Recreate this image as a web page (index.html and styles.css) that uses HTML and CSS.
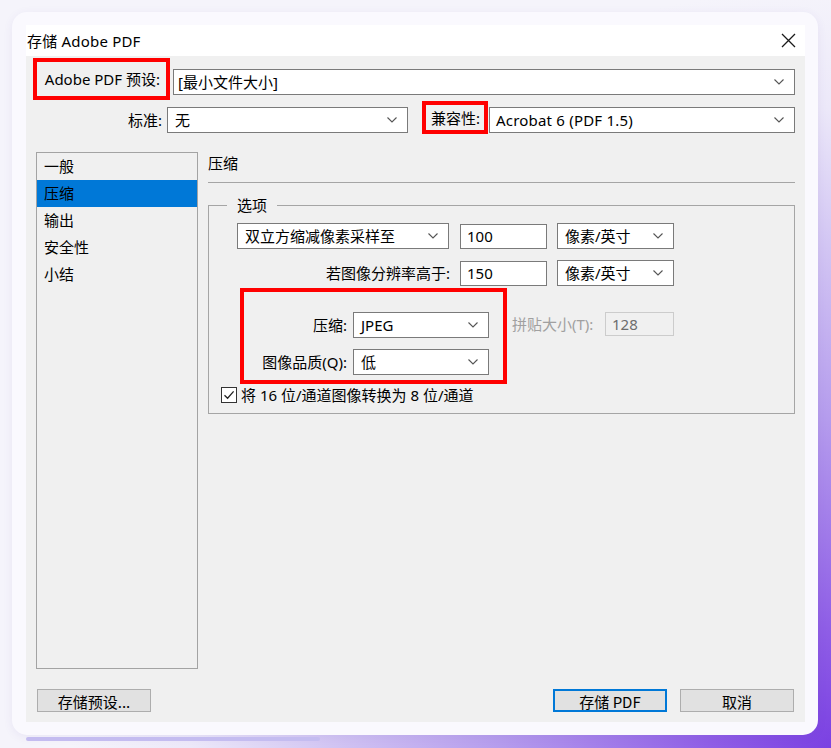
FILE: index.html
```html
<!DOCTYPE html>
<html lang="zh-CN">
<head>
<meta charset="utf-8">
<title>存储 Adobe PDF</title>
<link rel="stylesheet" href="styles.css">
</head>
<body>
<div class="card">
  <div class="dialog">
    <div class="titlebar">
      <span class="title">存储 Adobe PDF</span>
      <svg class="close" width="15" height="15" viewBox="0 0 15 15"><path d="M1 1L14 14M14 1L1 14" stroke="#1a1a1a" stroke-width="1.3" fill="none"/></svg>
    </div>
    <div class="body">
      <div class="row row-preset">
        <label class="mark lbl-preset">Adobe PDF 预设:</label>
        <div class="select sel-preset"><span class="val">[最小文件大小]</span><svg class="chev" width="10" height="6" viewBox="0 0 10 6"><path d="M0.5 0.5L5 5L9.5 0.5" stroke="#555" stroke-width="1.1" fill="none"/></svg></div>
      </div>
      <div class="row row-std">
        <label class="lbl-std">标准:</label>
        <div class="select sel-std"><span class="val">无</span><svg class="chev" width="10" height="6" viewBox="0 0 10 6"><path d="M0.5 0.5L5 5L9.5 0.5" stroke="#555" stroke-width="1.1" fill="none"/></svg></div>
        <label class="mark lbl-compat">兼容性:</label>
        <div class="select sel-compat"><span class="val">Acrobat 6 (PDF 1.5)</span><svg class="chev" width="10" height="6" viewBox="0 0 10 6"><path d="M0.5 0.5L5 5L9.5 0.5" stroke="#555" stroke-width="1.1" fill="none"/></svg></div>
      </div>
      <div class="main">
        <ul class="nav">
          <li>一般</li>
          <li class="active">压缩</li>
          <li>输出</li>
          <li>安全性</li>
          <li>小结</li>
        </ul>
        <section class="panel">
          <h2 class="panel-title">压缩</h2>
          <div class="sep"></div>
          <fieldset class="group">
            <legend>选项</legend>
            <div class="grow grow-a">
              <div class="select sel-method"><span class="val">双立方缩减像素采样至</span><svg class="chev" width="10" height="6" viewBox="0 0 10 6"><path d="M0.5 0.5L5 5L9.5 0.5" stroke="#555" stroke-width="1.1" fill="none"/></svg></div>
              <div class="input inp-res">100</div>
              <div class="select sel-unit"><span class="val">像素/英寸</span><svg class="chev" width="10" height="6" viewBox="0 0 10 6"><path d="M0.5 0.5L5 5L9.5 0.5" stroke="#555" stroke-width="1.1" fill="none"/></svg></div>
            </div>
            <div class="grow grow-b">
              <label class="lbl-above">若图像分辨率高于:</label>
              <div class="input inp-res">150</div>
              <div class="select sel-unit"><span class="val">像素/英寸</span><svg class="chev" width="10" height="6" viewBox="0 0 10 6"><path d="M0.5 0.5L5 5L9.5 0.5" stroke="#555" stroke-width="1.1" fill="none"/></svg></div>
            </div>
            <div class="grow grow-c">
              <div class="mark-box">
                <div class="pair">
                  <label class="lbl-pair">压缩:</label>
                  <div class="select sel-pair"><span class="val">JPEG</span><svg class="chev" width="10" height="6" viewBox="0 0 10 6"><path d="M0.5 0.5L5 5L9.5 0.5" stroke="#555" stroke-width="1.1" fill="none"/></svg></div>
                </div>
                <div class="pair">
                  <label class="lbl-pair">图像品质(Q):</label>
                  <div class="select sel-pair"><span class="val">低</span><svg class="chev" width="10" height="6" viewBox="0 0 10 6"><path d="M0.5 0.5L5 5L9.5 0.5" stroke="#555" stroke-width="1.1" fill="none"/></svg></div>
                </div>
              </div>
              <div class="tile">
                <label class="lbl-tile">拼贴大小(T):</label>
                <div class="input inp-tile">128</div>
              </div>
            </div>
            <div class="check-row">
              <span class="checkbox"><svg width="12" height="12" viewBox="0 0 12 12"><path d="M1.5 6.2L4.6 9.3L10.6 2.4" stroke="#222" stroke-width="1.3" fill="none"/></svg></span>
              <span>将 16 位/通道图像转换为 8 位/通道</span>
            </div>
          </fieldset>
        </section>
      </div>
      <div class="footer">
        <button class="btn">存储预设...</button>
        <div class="spacer"></div>
        <button class="btn btn-default">存储 PDF</button>
        <button class="btn">取消</button>
      </div>
    </div>
  </div>
</div>
<div class="underline"></div>
</body>
</html>
```
FILE: styles.css
```css
html, body {
  margin: 0;
  padding: 0;
}

body {
  width: 831px;
  height: 748px;
  overflow: hidden;
  background:
    radial-gradient(circle at 100% 100%, #7b41e2 0, #8f5ee6 120px, #b59ced 330px, #d2c5f3 500px, #ece8f9 640px, #f5f4fb 760px);
  font-family: "Noto Sans", "Noto Sans CJK SC", sans-serif;
  font-size: 15px;
  color: #000;
}

/* outer rounded window frame */
.card {
  margin: 12px 0 0 12px;
  width: 806px;
  height: 723px;
  box-sizing: border-box;
  padding: 13px 13px 13px 14px;
  background: #faf9fe;
  border-radius: 15px;
  box-shadow: 0 2px 10px rgba(90, 70, 170, 0.08);
}

.underline {
  margin: 2px 0 0 26px;
  width: 294px;
  height: 4px;
  border-radius: 2px;
  background: #c4bcf0;
}

.dialog {
  display: flex;
  flex-direction: column;
  height: 100%;
}

.titlebar {
  height: 31px;
  flex: none;
  display: flex;
  align-items: center;
  justify-content: space-between;
  background: #fff;
  padding: 0 9px 0 1px;
}

.title {
  font-size: 15px;
  line-height: 20px;
  letter-spacing: 0.2px;
}

.body {
  flex: 1;
  background: #f0f0f0;
  padding: 2px 10px 0 7px;
  display: flex;
  flex-direction: column;
}

/* generic controls */
.select,
.input {
  box-sizing: border-box;
  height: 26px;
  border: 1px solid #7a7a7a;
  background: #fff;
  display: flex;
  align-items: center;
  line-height: 20px;
  white-space: nowrap;
}

.select {
  padding: 0 10px 0 7px;
  justify-content: space-between;
}

.select .chev {
  flex: none;
}

.input {
  padding: 0 6px;
}

label {
  white-space: nowrap;
  line-height: 20px;
}

/* red annotation frame */
.mark {
  box-sizing: border-box;
  border: 4px solid #f00;
  display: flex;
  align-items: center;
}

.row {
  display: flex;
  align-items: flex-start;
}

.lbl-preset {
  width: 137px;
  height: 42px;
  justify-content: flex-end;
  padding-right: 6px;
}

.sel-preset {
  flex: 1;
  margin: 11px 0 0 3px;
  padding-left: 4px;
}

.row-std {
  margin-top: 1px;
}

.lbl-std {
  width: 129px;
  text-align: right;
  margin-top: 6px;
  line-height: 26px;
}

.sel-std {
  width: 241px;
  margin: 6px 0 0 5px;
}

.lbl-compat {
  width: 66px;
  height: 33px;
  margin-left: 14px;
  justify-content: center;
  padding-left: 1px;
}

.sel-compat {
  flex: 1;
  margin: 6px 0 0 1px;
  padding-left: 6px;
}

.sel-compat .val {
  letter-spacing: 0.2px;
}

/* left category list + right settings panel */
.main {
  display: flex;
  margin-top: 18px;
  gap: 10px;
}

.nav {
  list-style: none;
  margin: 0 0 0 3px;
  padding: 0;
  width: 162px;
  height: 517px;
  box-sizing: border-box;
  border: 1px solid #a3a3a3;
  background: #f0f0f0;
}

.nav li {
  height: 27px;
  line-height: 27px;
  padding-left: 7px;
}

.nav li.active {
  background: #0078d7;
}

.panel {
  flex: 1;
  display: flex;
  flex-direction: column;
}

.panel-title {
  margin: 0;
  font-size: 15px;
  font-weight: normal;
  line-height: 22px;
}

.sep {
  margin-top: 8px;
  height: 1px;
  background: #a5a5a5;
}

.group {
  margin: 12px 0 0 0;
  padding: 8px 0 0 0;
  min-width: 0;
  height: 219px;
  box-sizing: border-box;
  border: 1px solid #a5a5a5;
}

.group legend {
  margin-left: 18px;
  padding: 0 10px;
  line-height: 20px;
}

.grow {
  display: flex;
  align-items: center;
}

.grow-a {
  padding-left: 28px;
}

.sel-method {
  width: 212px;
}

.inp-res {
  width: 87px;
  height: 25px;
  margin-left: 11px;
}

.sel-unit {
  width: 117px;
  margin-left: 10px;
}

.grow-b {
  margin-top: 11px;
}

.grow-b .inp-res {
  margin-left: 10px;
}

.lbl-above {
  width: 241px;
  text-align: right;
}

.grow-c {
  margin-top: 2px;
  align-items: flex-start;
  padding-left: 31px;
}

.mark-box {
  width: 267px;
  box-sizing: border-box;
  border: 4px solid #f00;
  padding: 20px 0 5px 0;
  display: flex;
  flex-direction: column;
  gap: 11px;
}

.pair {
  display: flex;
  align-items: center;
}

.lbl-pair {
  width: 103px;
  text-align: right;
}

.sel-pair {
  width: 136px;
  margin-left: 6px;
}

.tile {
  display: flex;
  align-items: center;
  margin: 24px 0 0 5px;
}

.lbl-tile {
  width: 88px;
  color: #a0a0a0;
}

.inp-tile {
  width: 69px;
  height: 24px;
  margin-left: 5px;
  background: #f0f0f0;
  border-color: #cccccc;
  color: #6d6d6d;
}

.check-row {
  display: flex;
  align-items: center;
  margin: 1px 0 0 12px;
  gap: 4px;
  line-height: 20px;
}

.checkbox {
  box-sizing: border-box;
  width: 16px;
  height: 16px;
  border: 1px solid #333;
  background: #fff;
  display: flex;
  align-items: center;
  justify-content: center;
}

/* dialog buttons */
.footer {
  display: flex;
  margin-top: 20px;
  padding-left: 4px;
  gap: 13px;
}

.spacer {
  flex: 1;
}

.btn {
  box-sizing: border-box;
  width: 114px;
  height: 23px;
  margin: 0;
  padding: 3px 0 0 0;
  border: 1px solid #adadad;
  background: #e1e1e1;
  font-family: "Noto Sans CJK SC", "Noto Sans", sans-serif;
  font-size: 15px;
  line-height: 18px;
  color: #000;
}

.btn-default {
  border: 2px solid #0078d7;
  padding-top: 2px;
}

.btn:last-child {
  margin-right: 1px;
}
```
